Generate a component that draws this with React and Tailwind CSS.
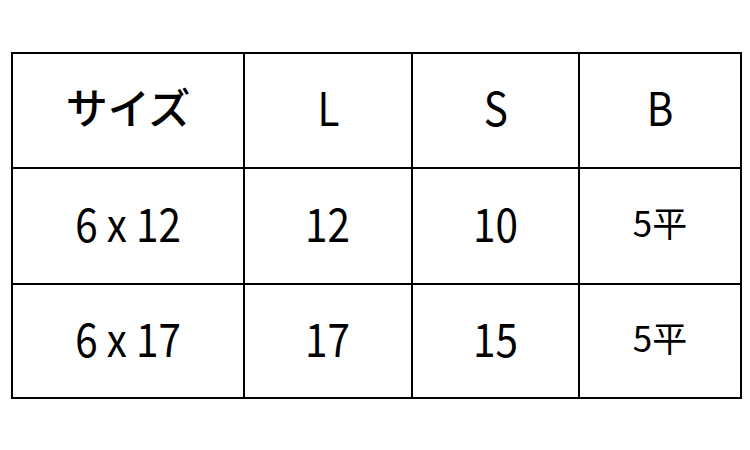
import React from 'react';

const rows = [
  ['サイズ', 'L', 'S', 'B'],
  ['6 x 12', '12', '10', '5平'],
  ['6 x 17', '17', '15', '5平'],
];

const heights = ['h-[113px]', 'h-[114px]', 'h-[112px]'];

const cellText = (r, c) => {
  if (r === 0 && c === 0) return 'text-[42px] font-medium';
  if (c === 3 && r > 0) return 'text-[35px]';
  return 'text-[46px] scale-x-[0.88]';
};

const App = () => {
  return (
    <div className="w-[750px] h-[450px] bg-white pl-[11px] pt-[52px]" style={{ fontFamily: '"Noto Sans CJK JP", sans-serif' }}>
      <div className="grid grid-cols-[230px_166px_165px_160px] gap-[2px] p-[2px] bg-black w-[731px] text-black">
        {rows.map((row, r) =>
          row.map((cell, c) => (
            <div key={r + '-' + c} className={`${heights[r]} bg-white flex items-center justify-center pb-[9px]`}>
              <span className={`leading-none ${cellText(r, c)}`}>{cell}</span>
            </div>
          ))
        )}
      </div>
    </div>
  );
};

export default App;
